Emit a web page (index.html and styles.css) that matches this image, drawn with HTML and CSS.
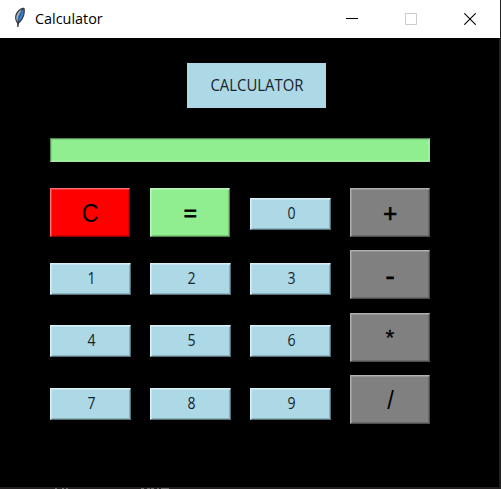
FILE: index.html
```html
<!DOCTYPE html>
<html lang="en">
<head>
<meta charset="utf-8">
<title>Calculator</title>
<link rel="stylesheet" href="styles.css">
</head>
<body>
<div class="window">
  <header class="titlebar">
    <svg class="feather" width="16" height="22" viewBox="0 0 16 22">
      <path d="M5.2 16.5 C1.6 12 2.6 5 8.6 1.6 C10 .8 11.6 .6 12.6 1.2 C13.6 6 12 12 7 16.4 L6.2 20 H5.4 Z" fill="#353b42"/>
      <path d="M4.2 11.5 C4.2 7.5 6.4 4 9.6 2.4 L7.4 10 L5.4 15 Z" fill="#a9b4bf"/>
      <path d="M5.4 14.8 C5 9.6 7.6 4.4 11.4 2.2 C12.2 6.6 10.4 11.6 6.4 15 Z" fill="#3f82cf"/>
      <path d="M10.6 3.6 C7.8 8 6.2 12.5 5.8 20" fill="none" stroke="#1b2838" stroke-width=".6"/>
    </svg>
    <h1 class="title">Calculator</h1>
    <div class="controls">
      <svg width="12" height="12" viewBox="0 0 12 12"><path d="M0 5.5H12" stroke="#000"/></svg>
      <svg width="12" height="12" viewBox="0 0 12 12"><path d="M.5.5h11v11H.5z" fill="none" stroke="#ccc"/></svg>
      <svg width="12" height="12" viewBox="0 0 12 12"><path d="M.3.3l11.4 11.4M11.7.3L.3 11.7" stroke="#000" stroke-width="1.1"/></svg>
    </div>
  </header>
  <main class="body">
    <div class="label"><span>CALCULATOR</span></div>
    <div class="entry"></div>
    <div class="keys">
      <button class="key clear"><span>C</span></button>
      <button class="key equals"><span>=</span></button>
      <button class="key num first"><span>0</span></button>
      <button class="key op"><span>+</span></button>

      <button class="key num"><span>1</span></button>
      <button class="key num"><span>2</span></button>
      <button class="key num"><span>3</span></button>
      <button class="key op"><span class="minus">-</span></button>

      <button class="key num mid"><span>4</span></button>
      <button class="key num mid"><span>5</span></button>
      <button class="key num mid"><span>6</span></button>
      <button class="key op"><span class="star">*</span></button>

      <button class="key num"><span>7</span></button>
      <button class="key num"><span>8</span></button>
      <button class="key num"><span>9</span></button>
      <button class="key op"><span class="slash">/</span></button>
    </div>
  </main>
  <svg class="edge" width="501" height="2" viewBox="0 0 501 2">
    <path d="M55 1.5h2M62 1.5h2M66 1.5h2M141 1.5h3M147 1.5h3M151 1.5h3M157 1.5h2M161 1.5h8" stroke="#6c6766"/>
  </svg>
</div>
</body>
</html>
```
FILE: styles.css
```css
* { box-sizing: border-box; }

body {
  margin: 0;
  overflow: hidden;
  font-family: "Open Sans", "Noto Sans", sans-serif;
}

.window {
  width: 501px;
  height: 489px;
  display: flex;
  flex-direction: column;
  background: #231f20;
}

.titlebar {
  width: 500px;
  height: 38px;
  display: flex;
  align-items: center;
  padding: 0 24px 0 12px;
  background: #fff;
}

.feather { margin: 0 7px 3px 0; }

.title {
  margin: 0;
  font-size: 14.4px;
  font-weight: 400;
  line-height: 20px;
  color: #000;
}

.controls {
  display: flex;
  gap: 47px;
  margin-left: auto;
}

.controls svg { display: block; }

.body {
  width: 499px;
  height: 449px;
  padding: 25px 0 0 50px;
  background: #000;
}

.label {
  width: 139px;
  height: 45px;
  margin-left: 137px;
  padding-bottom: 2px;
  display: flex;
  align-items: center;
  justify-content: center;
  background: #add8e6;
  color: #17242a;
  font: 16px/20px "Open Sans", "Noto Sans", sans-serif;
}

.label span { transform: scaleX(.93); }

.entry {
  width: 380px;
  height: 24px;
  margin-top: 30px;
  background: #90ee90;
  border: 1px solid;
  border-color: #558c55 #9bea9b #9bea9b #558c55;
  box-shadow: inset 1px 1px #7fd27f, inset -1px -1px #9ff29f;
}

.keys {
  display: grid;
  grid-template-columns: repeat(4, 100px);
  grid-template-rows: 62px 63px 62px 49px;
  margin-top: 26px;
}

.key {
  width: 80px;
  height: 49px;
  display: flex;
  align-items: center;
  justify-content: center;
  padding: 0;
  border: 1px solid;
  color: #000;
  font: 25px/30px "Liberation Sans", sans-serif;
}

.clear {
  background: #f00;
  border-color: #ff7070 #8c0000 #8c0000 #ff7070;
  box-shadow: inset 1px 1px #ff3030, inset -1px -1px #d00000;
}

.clear span { transform: scaleX(.93); }

.equals {
  background: #90ee90;
  border-color: #b9f6b9 #4c844c #4c844c #b9f6b9;
  box-shadow: inset 1px 1px #a6f2a6, inset -1px -1px #78c678;
}

.equals span {
  -webkit-text-stroke: .9px #000;
  transform: scale(.9, .85);
}

.op {
  background: #808080;
  border-color: #b0b0b0 #4c4c4c #4c4c4c #b0b0b0;
  box-shadow: inset 1px 1px #959595, inset -1px -1px #6a6a6a;
}

.op span {
  -webkit-text-stroke: .7px #000;
  transform: scaleX(.95);
}

.op .minus { transform: translateY(1px) scaleX(1.1); }

.op .star {
  -webkit-text-stroke: .3px #000;
  transform: translateY(-1px) scale(.9);
}

.op .slash { -webkit-text-stroke: 0; }

.num {
  width: 81.4px;
  height: 31.5px;
  margin-top: 13px;
  padding: 0 0 1px 1px;
  background: #add8e6;
  border-color: #d9f0f6 #557079 #557079 #d9f0f6;
  box-shadow: inset 1px 1px #c4e5ef, inset -1px -1px #8db2be;
  color: #17242a;
  font: 16px/20px "Open Sans", "Noto Sans", sans-serif;
}

.num span { transform: scaleX(.88); }

.num.first { margin-top: 10px; }

.num.mid { margin-top: 12px; }

.edge { display: block; }
```
